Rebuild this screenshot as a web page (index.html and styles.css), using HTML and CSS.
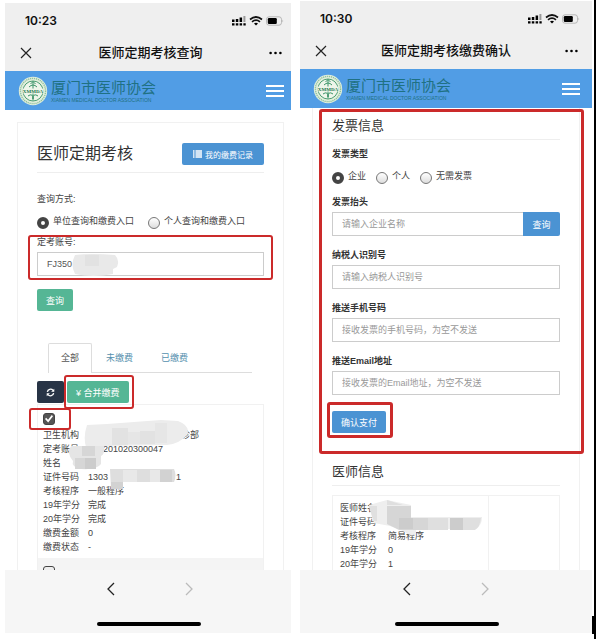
FILE: index.html
```html
<!DOCTYPE html>
<html lang="zh-CN">
<head>
    <meta charset="UTF-8">
    <meta name="viewport" content="width=device-width, initial-scale=1.0">
    <title>医师定期考核</title>
    <link rel="stylesheet" href="styles.css">
</head>
<body>
    <!-- shared icons -->
    <svg class="sprite" aria-hidden="true">
        <symbol id="signal" viewBox="0 0 52 10">
            <path d="M0 3.500h2.500v2.500H0zM3.800 3h2.500v3H3.800zM7.600 1.500h2.500V6H7.600z"/>
            <path d="M11.400 0h2v6h-2z" fill="#999"/>
            <path d="M0 7.200h2.500v2.300H0zM3.800 7.200h2.500v2.300H3.800zM7.600 7.200h2.500v2.300H7.600zM11.400 7.200h2.300v2.300h-2.300z"/>
            <path d="M18 3.500q6-5 12 0M20 5.800q4-3.300 8 0" fill="none" stroke="#111" stroke-width="1.700"/>
            <path d="M22 7.600q2-1.600 4 0l-2 2z"/>
            <rect x="34.500" y=".8" width="15" height="8.400" rx="2.500" fill="none" stroke="#aaa" stroke-width=".8"/>
            <rect x="35.800" y="2" width="9" height="6" rx="1.200"/>
            <path d="M50.500 3.500q1.500 1.500 0 3z" fill="#aaa"/>
        </symbol>
        <symbol id="close" viewBox="0 0 12 12">
            <path d="M1 1l10 10M11 1L1 11" fill="none" stroke="#222" stroke-width="1.200"/>
        </symbol>
        <symbol id="more" viewBox="0 0 13 4">
            <circle cx="1.600" cy="2" r="1.300"/><circle cx="6.500" cy="2" r="1.300"/><circle cx="11.400" cy="2" r="1.300"/>
        </symbol>
        <symbol id="seal" viewBox="0 0 30 30">
            <circle cx="15" cy="15" r="14.200" fill="#e2efdc"/>
            <circle cx="15" cy="15" r="12.600" fill="none" stroke="#8fc0a0" stroke-width="1.400" stroke-dasharray="1.200 .8"/>
            <circle cx="15" cy="15" r="10" fill="#eef5ea" stroke="#3b9468" stroke-width=".9"/>
            <path d="M15 5.500v19M12.500 8l2.500-2.500L17.500 8M11 11q4-4 8 0M10 20q5-3.500 5 3 0-6.500 5-3" fill="none" stroke="#3b9468" stroke-width="1"/>
            <path d="M4.500 12.500h21v5h-21z" fill="#eef5ea"/>
        </symbol>
        <symbol id="menu" viewBox="0 0 18 12">
            <path d="M0 1h18M0 6h18M0 11h18" stroke="#fff" stroke-width="1.800"/>
        </symbol>
        <symbol id="back" viewBox="0 0 8 14">
            <path d="M7 1L1 7l6 6" fill="none" stroke="currentColor" stroke-width="1.300"/>
        </symbol>
        <symbol id="forward" viewBox="0 0 8 14">
            <path d="M1 1l6 6-6 6" fill="none" stroke="currentColor" stroke-width="1.300"/>
        </symbol>
    </svg>

    <div class="page">
        <section class="phone phone-query">
            <div class="status-bar">
                <span>10:23</span>
                <svg class="signal"><use href="#signal"/></svg>
            </div>
            <div class="title-bar">
                <button class="icon-btn" aria-label="关闭"><svg class="close"><use href="#close"/></svg></button>
                <h1>医师定期考核查询</h1>
                <button class="icon-btn" aria-label="更多"><svg class="more"><use href="#more"/></svg></button>
            </div>
            <header class="site-header">
                <svg class="seal" viewBox="0 0 30 30"><use href="#seal"/><text x="15" y="16.800" text-anchor="middle" class="seal-text">XMMDA</text></svg>
                <div class="brand">
                    <strong>厦门市医师协会</strong>
                    <small>XIAMEN MEDICAL DOCTOR ASSOCIATION</small>
                </div>
                <button class="icon-btn" aria-label="菜单"><svg class="menu"><use href="#menu"/></svg></button>
            </header>

            <main class="content">
                <div class="card">
                    <div class="card-head">
                        <h2>医师定期考核</h2>
                        <button class="btn btn-blue">
                            <svg class="list" viewBox="0 0 9 8"><path d="M0 1h1.500M2.500 1H9M0 3h1.500M2.500 3H9M0 5h1.500M2.500 5H9M0 7h1.500M2.500 7H9" stroke="#fff" stroke-width="1.400"/></svg>
                            我的缴费记录
                        </button>
                    </div>

                    <form class="query-form">
                        <p class="caption">查询方式:</p>
                        <div class="radios">
                            <label><input type="radio" name="mode" checked>单位查询和缴费入口</label>
                            <label><input type="radio" name="mode">个人查询和缴费入口</label>
                        </div>
                        <div class="field marked mark-account">
                            <label for="account">定考账号:</label>
                            <input class="text" id="account" type="text" value="FJ350">
                            <svg class="mask mask-account" viewBox="0 0 48 23">
                                <path d="M4 2Q20 0 44 2q5 5 2 12l-4 2v5q-20 4-38 0-5-9 0-19z" fill="#e9e9e9"/>
                                <path d="M14 2h14v11H14z" fill="#e2e2e2"/>
                            </svg>
                        </div>
                        <button type="button" class="btn btn-green">查询</button>
                    </form>

                    <nav class="tabs">
                        <a href="#" class="active">全部</a>
                        <a href="#">未缴费</a>
                        <a href="#">已缴费</a>
                    </nav>

                    <div class="toolbar">
                        <button class="btn btn-dark" aria-label="刷新">
                            <svg class="refresh" viewBox="0 0 10 10"><path d="M1.500 4.300a3.600 3.600 0 0 1 6.300-1.700M8.500 5.700a3.600 3.600 0 0 1-6.300 1.700" fill="none" stroke="#fff" stroke-width="1.500"/><path d="M9.200.8v3.500H5.700zM.8 9.200V5.700h3.500z" fill="#fff"/></svg>
                        </button>
                        <div class="marked mark-merge">
                            <button class="btn btn-green">¥ 合并缴费</button>
                        </div>
                    </div>

                    <div class="records">
                        <div class="record">
                            <div class="pick marked mark-pick"><input type="checkbox" aria-label="选择记录" checked></div>
                            <table>
                                <tr><th>卫生机构</th><td><span class="gap gap-org"></span>诊部</td></tr>
                                <tr><th>定考账号</th><td>FJ3201020300047</td></tr>
                                <tr><th>姓名</th><td></td></tr>
                                <tr><th>证件号码</th><td>1303<span class="gap gap-id"></span>1</td></tr>
                                <tr><th>考核程序</th><td>一般程序</td></tr>
                                <tr><th>19年学分</th><td>完成</td></tr>
                                <tr><th>20年学分</th><td>完成</td></tr>
                                <tr><th>缴费金额</th><td>0</td></tr>
                                <tr><th>缴费状态</th><td>-</td></tr>
                            </table>
                            <svg class="mask mask-record" viewBox="0 0 152 88">
                                <path d="M49 20l20-1 54-4 17 1q13 5 9 14-8 9-20 10l-60 1-21 1q-3-10 1-22z" fill="#ececec"/>
                                <path d="M74 23h16v17H74zM102 26h15v13h-15z" fill="#e2e2e2"/>
                                <path d="M90 27h12v12H90zM117 18h12v20h-12z" fill="#e6e6e6"/>
                                <path d="M33 41h33q1 8-3 10v8q-4 6-20 5-10-2-8-8-7-8-2-15z" fill="#e5e5e5"/>
                                <path d="M37 53h10v11H37zM44 41h13v10H44z" fill="#d6d6d6"/>
                                <path d="M47 53h11v11H47z" fill="#ccc"/>
                                <path d="M72 64h64q3 6 0 13H85v7H73z" fill="#dedede"/>
                                <path d="M85 65h14v12H85zM112 65h10v12h-10z" fill="#e8e8e8"/>
                                <path d="M73 77h12v7H73zM122 65h12v12h-12z" fill="#d2d2d2"/>
                            </svg>
                        </div>
                        <div class="record record-alt">
                            <div class="pick"><input type="checkbox" aria-label="选择记录"></div>
                        </div>
                    </div>
                </div>
            </main>

            <footer class="nav-bar">
                <button class="icon-btn" aria-label="后退"><svg class="arrow"><use href="#back"/></svg></button>
                <button class="icon-btn" aria-label="前进" disabled><svg class="arrow"><use href="#forward"/></svg></button>
            </footer>
        </section>

        <section class="phone phone-pay">
            <div class="status-bar">
                <span>10:30</span>
                <svg class="signal"><use href="#signal"/></svg>
            </div>
            <div class="title-bar">
                <button class="icon-btn" aria-label="关闭"><svg class="close"><use href="#close"/></svg></button>
                <h1>医师定期考核缴费确认</h1>
                <button class="icon-btn" aria-label="更多"><svg class="more"><use href="#more"/></svg></button>
            </div>
            <header class="site-header">
                <svg class="seal" viewBox="0 0 30 30"><use href="#seal"/><text x="15" y="16.800" text-anchor="middle" class="seal-text">XMMDA</text></svg>
                <div class="brand">
                    <strong>厦门市医师协会</strong>
                    <small>XIAMEN MEDICAL DOCTOR ASSOCIATION</small>
                </div>
                <button class="icon-btn" aria-label="菜单"><svg class="menu"><use href="#menu"/></svg></button>
            </header>

            <main class="content">
                <div class="card">
                    <form class="invoice marked mark-invoice">
                        <h3>发票信息</h3>
                        <p class="caption">发票类型</p>
                        <div class="radios">
                            <label><input type="radio" name="type" checked>企业</label>
                            <label><input type="radio" name="type">个人</label>
                            <label><input type="radio" name="type">无需发票</label>
                        </div>
                        <div class="field">
                            <label for="company">发票抬头</label>
                            <div class="input-group">
                                <input class="text" id="company" type="text" placeholder="请输入企业名称">
                                <button type="button" class="btn btn-blue">查询</button>
                            </div>
                        </div>
                        <div class="field">
                            <label for="tax">纳税人识别号</label>
                            <input class="text" id="tax" type="text" placeholder="请输入纳税人识别号">
                        </div>
                        <div class="field">
                            <label for="mobile">推送手机号码</label>
                            <input class="text" id="mobile" type="tel" placeholder="接收发票的手机号码，为空不发送">
                        </div>
                        <div class="field">
                            <label for="email">推送Email地址</label>
                            <input class="text" id="email" type="email" placeholder="接收发票的Email地址，为空不发送">
                        </div>
                        <div class="marked mark-confirm">
                            <button type="button" class="btn btn-blue">确认支付</button>
                        </div>
                    </form>

                    <h3>医师信息</h3>
                    <div class="doctor">
                        <table>
                            <tr><th>医师姓名</th><td></td></tr>
                            <tr><th>证件号码</th><td></td></tr>
                            <tr><th>考核程序</th><td>简易程序</td></tr>
                            <tr><th>19年学分</th><td>0</td></tr>
                            <tr><th>20年学分</th><td>1</td></tr>
                        </table>
                        <svg class="mask mask-doctor" viewBox="0 0 152 40">
                            <path d="M36 9l18-5 24 5v12h71q0 8-6 12H83v5q-6 3-11-2-8-4-15-6l-16-3q-3-8-5-18z" fill="#eee"/>
                            <path d="M36 10h8v15h-3q-3-7-5-15z" fill="#e0e0e0"/>
                            <path d="M54 10h24v12h17v12H66l-12-6z" fill="#d6d6d6"/>
                            <path d="M54 4l16 5H54zM95 22h20v12H95zM130 22h18q-1 9-6 12h-12z" fill="#dfdfdf"/>
                            <path d="M66 22h14v11H66zM117 22h13v12h-13z" fill="#ccc"/>
                        </svg>
                    </div>
                </div>
            </main>

            <footer class="nav-bar">
                <button class="icon-btn" aria-label="后退"><svg class="arrow"><use href="#back"/></svg></button>
                <button class="icon-btn" aria-label="前进" disabled><svg class="arrow"><use href="#forward"/></svg></button>
            </footer>
        </section>
    </div>
</body>
</html>
```
FILE: styles.css
```css
* {
    box-sizing: border-box;
}

body {
    margin: 0;
    background: #fff;
    color: #444;
    font-family: "Liberation Sans", "Noto Sans CJK SC", sans-serif;
    font-size: 9px;
    line-height: 14px;
}

h1, h2, h3, p {
    margin: 0;
    font-weight: 400;
}

button, input {
    font-family: inherit;
    font-size: 9px;
    margin: 0;
}

svg {
    display: block;
}

.sprite {
    position: absolute;
    width: 0;
    height: 0;
}

.page {
    position: relative;
    display: flex;
    gap: 9px;
    height: 100vh;
    padding: 0 2px 6px 5px;
    border-right: 2px solid #000;
}

.page::after {
    content: "";
    position: absolute;
    right: -2px;
    bottom: 5px;
    width: 4px;
    height: 18px;
    background: #000;
}

/* phone frame */
.phone {
    display: flex;
    flex-direction: column;
    min-width: 0;
    --side: 12px;
}

.phone-query {
    flex: 286;
    padding-top: 3px;
    --side: 7px;
}

.phone-pay {
    flex: 292;
    padding-top: 1px;
}

.status-bar,
.title-bar {
    display: flex;
    flex-shrink: 0;
    align-items: center;
    justify-content: space-between;
    background: #efefef;
    color: #111;
}

.status-bar {
    height: 35px;
    padding: 0 var(--side) 0 20px;
    font-family: Inter, sans-serif;
    font-size: 12px;
    font-weight: 600;
}

.title-bar {
    height: 33px;
    padding: 0 calc(var(--side) + 2px) 3px 15px;
}

.title-bar h1 {
    font-size: 13px;
    font-weight: 500;
    line-height: 20px;
}

.icon-btn {
    padding: 0;
    border: 0;
    background: none;
    color: #222;
}

.icon-btn:disabled {
    color: #bbb;
}

.signal {
    width: 52px;
    height: 10px;
}

.close {
    width: 12px;
    height: 12px;
}

.more {
    width: 13px;
    height: 4px;
}

.site-header {
    display: flex;
    flex-shrink: 0;
    align-items: center;
    height: 39px;
    padding: 0 var(--side) 0 13px;
    background: #519de5;
}

.seal {
    width: 30px;
    height: 30px;
}

.seal-text {
    font: bold 5px "Liberation Serif", serif;
    fill: #23774e;
}

.brand {
    flex: 1;
    padding-left: 3px;
    color: #1f7183;
    white-space: nowrap;
}

.brand strong,
.brand small {
    display: block;
}

.brand strong {
    font-family: "Liberation Serif", "Noto Sans CJK SC", serif;
    font-size: 15px;
    font-weight: 400;
    line-height: 18px;
}

.brand small {
    font-size: 5px;
    line-height: 6px;
}

.menu {
    width: 18px;
    height: 12px;
}

.content {
    flex: 1;
    min-height: 0;
    padding: 0 var(--side) 0 12px;
    overflow: hidden;
    background: #fff;
}

.phone-query .content {
    padding-top: 12px;
}

.card {
    padding: 9px 19px;
    border: 1px solid #f1f1f1;
    border-top: 0;
}

.phone-query .card {
    padding-top: 20px;
    border-top: 1px solid #f1f1f1;
}

.card-head {
    display: flex;
    align-items: center;
    justify-content: space-between;
    padding-bottom: 7px;
    border-bottom: 1px solid #eee;
}

h2 {
    color: #333;
    font-size: 16px;
    line-height: 20px;
}

h3 {
    padding-bottom: 4px;
    border-bottom: 1px solid #eee;
    color: #333;
    font-size: 13px;
    line-height: 18px;
}

/* buttons */
.btn {
    display: flex;
    align-items: center;
    justify-content: center;
    gap: 3px;
    height: 22px;
    padding: 0 9px;
    border: 0;
    border-radius: 2px;
    color: #fff;
    white-space: nowrap;
}

.btn-blue {
    background: #4b93d3;
}

.btn-green {
    background: #55b695;
}

.btn-dark {
    width: 27px;
    padding: 0;
    background: #283446;
}

.card-head .btn {
    padding: 0 11px;
    font-size: 8px;
}

.list {
    width: 9px;
    height: 8px;
}

.refresh {
    width: 9px;
    height: 9px;
}

/* forms */
.query-form {
    padding-top: 19px;
}

.radios {
    display: flex;
    gap: 14px;
    margin: 10px 0 6px;
    white-space: nowrap;
}

.radios label {
    display: flex;
    gap: 4px;
    line-height: 11px;
}

input[type="radio"] {
    appearance: none;
    width: 12px;
    height: 12px;
    margin-top: 1px;
    border: 1px solid #777;
    border-radius: 50%;
    background: linear-gradient(#fff, #ddd);
}

input[type="radio"]:checked {
    border: 4px solid #444;
    background: #fff;
}

input[type="checkbox"] {
    appearance: none;
    display: grid;
    place-items: center;
    width: 12px;
    height: 12px;
    border: 1px solid #444;
    border-radius: 3px;
    background: #eee;
}

input[type="checkbox"]:checked {
    background: #555;
}

input[type="checkbox"]:checked::after {
    content: "";
    width: 8px;
    height: 8px;
    background: #fff;
    clip-path: polygon(0 50%, 15% 35%, 38% 60%, 85% 0, 100% 15%, 40% 95%);
}

.field > label {
    display: block;
    margin-bottom: 3px;
}

.text {
    display: block;
    width: 100%;
    height: 24px;
    padding: 0 9px;
    border: 1px solid #ccc;
    border-radius: 0;
    background: #fff;
    color: #555;
}

.text::placeholder {
    color: #999;
}

.query-form .btn {
    margin-top: 13px;
}

.invoice .caption,
.invoice .field > label {
    color: #333;
    font-weight: 700;
}

.invoice .caption {
    padding-top: 7px;
}

.invoice .radios {
    gap: 10px;
    margin-bottom: 11px;
}

.invoice .field {
    margin-bottom: 12px;
}

.input-group {
    display: flex;
}

.input-group .text {
    flex: 1;
    min-width: 0;
    border-right: 0;
}

.input-group .btn {
    width: 37px;
    height: 24px;
    border-radius: 0 2px 2px 0;
}

/* tabs and toolbar */
.tabs {
    display: flex;
    margin: 32px 12px 0 11px;
    border-bottom: 1px solid #ddd;
}

.tabs a {
    height: 29px;
    padding: 0 13px;
    border: 1px solid transparent;
    border-bottom: 0;
    color: #5590ae;
    line-height: 28px;
    text-decoration: none;
}

.tabs a.active {
    padding: 0 12px;
    margin-bottom: -1px;
    height: 30px;
    border-color: #ddd;
    border-radius: 2px 2px 0 0;
    background: #fff;
    color: #555;
}

.toolbar {
    display: flex;
    gap: 3px;
    margin-top: 8px;
}

/* records */
.records {
    margin-top: 1px;
    border: 1px solid #f1f1f1;
}

.record {
    position: relative;
    padding: 8px 5px 4px;
}

.record-alt {
    background: #f4f4f4;
}

.pick {
    width: 12px;
    margin-bottom: 3px;
}

table {
    border-collapse: collapse;
}

th, td {
    height: 14px;
    padding: 0;
    font-weight: 400;
    text-align: left;
    white-space: nowrap;
}

th {
    width: 45px;
}

.gap {
    display: inline-block;
}

.gap-org {
    width: 93px;
}

.gap-id {
    width: 68px;
}

.invoice + h3 {
    margin-top: 30px;
}

.doctor {
    position: relative;
    display: grid;
    grid-template-columns: 155px 1fr;
    margin-top: 9px;
    border: 1px solid #f1f1f1;
}

.doctor table {
    margin: 5px 0 6px 7px;
}

.doctor th {
    width: 48px;
}

.doctor::after {
    content: "";
    border-left: 1px solid #f1f1f1;
}

/* grey patches over private data */
.mask {
    position: absolute;
    top: 0;
    left: 0;
}

.mask-account {
    top: 18px;
    left: 34px;
    width: 48px;
    height: 23px;
}

.mask-record {
    width: 152px;
    height: 88px;
}

.mask-doctor {
    width: 152px;
    height: 40px;
}

/* red highlight frames */
.marked {
    position: relative;
}

.marked::after {
    content: "";
    position: absolute;
    z-index: 1;
    border: 2px solid #cb2a2a;
    border-radius: 3px;
    pointer-events: none;
}

.mark-account::after {
    inset: 0 -9px -4px -9px;
}

.mark-merge::after {
    inset: -6px -5px -6px -3px;
}

.mark-pick::after {
    inset: -5px -16px -5px -14px;
}

.mark-invoice::after {
    inset: -8px -24px -21px -13px;
    border-width: 3px;
}

.mark-confirm {
    width: fit-content;
    margin-top: 16px;
}

.mark-confirm::after {
    inset: -9px -7px -5px -5px;
    border-width: 3px;
}

/* bottom bar */
.nav-bar {
    position: relative;
    display: flex;
    flex-shrink: 0;
    justify-content: center;
    gap: 70px;
    align-items: flex-start;
    height: 63px;
    padding: 12px 0 0;
    background: #f6f6f6;
}

.phone-query .nav-bar {
    padding-left: 4px;
}

.arrow {
    width: 8px;
    height: 14px;
}

.nav-bar::after {
    content: "";
    position: absolute;
    bottom: 7px;
    left: 50%;
    width: 104px;
    height: 4px;
    margin-left: -51px;
    border-radius: 2px;
    background: #000;
}
```
